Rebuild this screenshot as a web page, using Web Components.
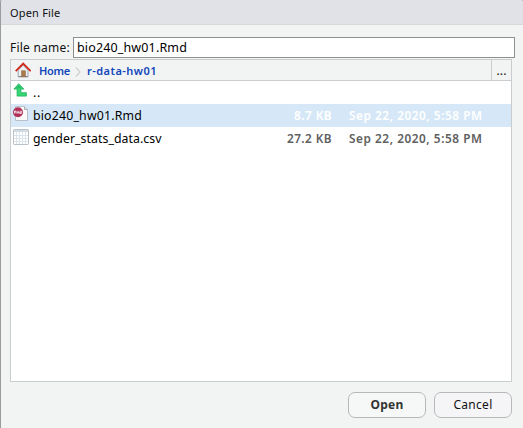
<!DOCTYPE html>
<html lang="en">
<head>
<meta charset="utf-8">
<title>Open File</title>
<style>
html,body{margin:0;height:100%;overflow:hidden}
body{font-family:"Noto Sans","Open Sans",sans-serif;font-size:13px;color:#111;background:#b9babd}
</style>
</head>
<body>
<open-dialog></open-dialog>
<script>
const define = (name, html, setup) => customElements.define(name, class extends HTMLElement {
  connectedCallback() {
    if (this.shadowRoot) return;
    const t = document.createElement('template');
    t.innerHTML = html;
    this.attachShadow({mode: 'open'}).append(t.content.cloneNode(true));
    if (setup) setup(this, this.shadowRoot);
  }
});

// A line of text tracked so that it fills its "w" attribute in pixels.
define('text-run', `<style>:host{display:inline-block;white-space:pre;line-height:16px}span{display:inline-block}</style><span><slot></slot></span>`, (el, root) => {
  const s = root.querySelector('span'), w = +el.getAttribute('w');
  if (w) {
    s.style.letterSpacing = (w - s.getBoundingClientRect().width) / el.textContent.length + 'px';
    el.style.width = w + 'px';
  }
});

const icons = {
  home: `<path d="M3.2 8.2 8 3.2l5 5v6.7H3.2z" fill="#eef0f1" stroke="#9aa5ad"/><path d="M3.5 14.5h9.5" stroke="#889"/><rect x="6.5" y="8.8" width="4" height="6" fill="#a87a4c" stroke="#916640" stroke-width=".5"/><path d="M.7 9.2 8.2 1.5l7.5 7.7" fill="none" stroke="#d32a1c" stroke-width="1.8"/>`,
  up: `<path d="M5.7.8 10.8 6.1H7.9v3.6h5.5v3.4H4.1v-7H.9z" fill="#35d777" stroke="#1fae58" stroke-width=".8"/><path d="M5.7 2 8.4 5.3H3z" fill="#27bc67"/>`,
  rmd: `<path d="M2.5 .5h9l3 3v11h-12z" fill="#fafafa" stroke="#b9bfc6"/><path d="M11.5 .5v3h3" fill="#ddd" stroke="#a9b0b8"/><circle cx="5" cy="6.2" r="5" fill="#b03058"/><rect x=".8" y="4.5" width="8.6" height="3.3" fill="#c4597a"/><path d="M1.5 7.4V5.1h1.3v1H1.5M4 7.4V5.7l.8.7.8-.7v1.7M8.3 4.9v2.5H6.8V6h1.5" fill="none" stroke="#fff" stroke-width=".7"/>`,
  csv: `<rect x=".5" y=".5" width="15" height="15" rx=".6" fill="#fff" stroke="#bcc2c9"/><path d="M1 1h14v2H1z" fill="#d3dbe4"/><path d="M3.5 3v12M6.5 3v12M9.5 3v12M12.5 3v12M1 6.5h14M1 9.5h14M1 12.5h14" stroke="#dbe3eb"/>`
};
define('file-icon', `<style>:host{display:block;width:16px;height:16px}svg{display:block}</style><svg width="16" height="16" viewBox="0 0 16 16" fill="none"></svg>`, (el, root) => {
  root.querySelector('svg').innerHTML = icons[el.getAttribute('name')];
});

define('title-bar', `<style>:host{display:block;box-sizing:border-box;height:25px;padding:5px 0 0 9px;background:#e1e2e7;border-bottom:1px solid #d5d7da;font-size:11px;color:#111}</style><slot></slot>`);

define('name-field', `<style>:host{display:flex;height:21px;padding:12px 8px 0 9px;font-size:12px}
.l{width:63px;padding-top:2px}.i{flex:1;box-sizing:border-box;border:1px solid #8e9090;background:#fff;padding:1px 0 0 3px;font-size:12.5px;color:#000}</style>
<div class="l"><slot name="label"></slot></div><div class="i"><slot></slot></div>`);

define('path-bar', `<style>:host{display:flex;height:20px;border-bottom:1px solid #c9cdcf;background:#f2f4f4;font-size:11px;color:#1147bb;font-weight:600}
file-icon{margin:2px 0 0 4px}.h{margin:3px 0 0 8px}.c{margin:7px 6px 0 5px;width:6px;height:10px}.p{margin-top:3px}
.m{margin-left:auto;box-sizing:border-box;width:20px;border-left:1px solid #c9cdcf;display:flex;justify-content:center}.m text-run{margin-top:3px;color:#111;font-size:12px;font-weight:400}</style>
<file-icon name="home"></file-icon><div class="h"><text-run w="31">Home</text-run></div>
<svg class="c" viewBox="0 0 6 10"><path d="m1 .5 4 4.5-4 4.5" fill="none" stroke="#ccd0d3" stroke-width="1.2"/></svg>
<div class="p"><text-run w="70">r-data-hw01</text-run></div><div class="m"><text-run w="10">...</text-run></div>`);

define('file-row', `<style>:host{display:flex;height:23px;font-size:12.3px;color:#000}:host([selected]){background:#d6e8f7}
file-icon{margin:2px 4px 0 2px;flex:none}.n,.s,.d{padding-top:3px}.n{flex:1}.s,.d{color:#606060;font-weight:600;font-size:11.8px}.s{width:45px;text-align:right;margin-right:17px}.d{width:133px;margin-right:29px}
:host([selected]) .s,:host([selected]) .d{color:#fff}</style>
<file-icon></file-icon><div class="n"><slot></slot></div><div class="s"><slot name="size"></slot></div><div class="d"><slot name="date"></slot></div>`, (el, root) => {
  const old = root.querySelector('file-icon'), icon = document.createElement('file-icon');
  icon.setAttribute('name', el.getAttribute('icon'));
  old.replaceWith(icon);
});

define('file-browser', `<style>:host{display:block;box-sizing:border-box;width:502px;height:323px;margin:1px 0 0 9px;border:1px solid #c9cdcf;background:#fff}</style><slot></slot>`);

define('dialog-button', `<style>:host{box-sizing:border-box;width:78px;height:26px;border:1px solid #b6b8ba;border-radius:7px;background:#f5f5f8;display:flex;justify-content:center;padding-top:4px;font-size:12px;color:#111}:host([primary]){background:#f6f8f7;font-weight:700;color:#333}</style><slot></slot>`);
define('button-bar', `<style>:host{display:flex;justify-content:flex-end;gap:8px;padding:10px 11px 0 0}</style><slot></slot>`);

define('open-dialog', `<style>:host{display:block;box-sizing:border-box;width:523px;height:428px;border-left:1px solid #999b9c;border-radius:3px 3px 0 0;overflow:hidden;background:#f2f4f4}</style>
<title-bar><text-run w="50.5">Open File</text-run></title-bar>
<name-field><text-run slot="label" w="60">File name:</text-run><text-run w="110">bio240_hw01.Rmd</text-run></name-field>
<file-browser><path-bar></path-bar>
<file-row icon="up"><text-run w="8">..</text-run></file-row>
<file-row icon="rmd" selected><text-run w="109">bio240_hw01.Rmd</text-run><text-run slot="size" w="38">8.7 KB</text-run><text-run slot="date" w="133.5">Sep 22, 2020, 5:58 PM</text-run></file-row>
<file-row icon="csv"><text-run w="128.5">gender_stats_data.csv</text-run><text-run slot="size" w="45">27.2 KB</text-run><text-run slot="date" w="133.5">Sep 22, 2020, 5:58 PM</text-run></file-row>
</file-browser>
<button-bar><dialog-button primary><text-run w="33">Open</text-run></dialog-button><dialog-button><text-run w="39">Cancel</text-run></dialog-button></button-bar>`);
</script>
</body>
</html>
